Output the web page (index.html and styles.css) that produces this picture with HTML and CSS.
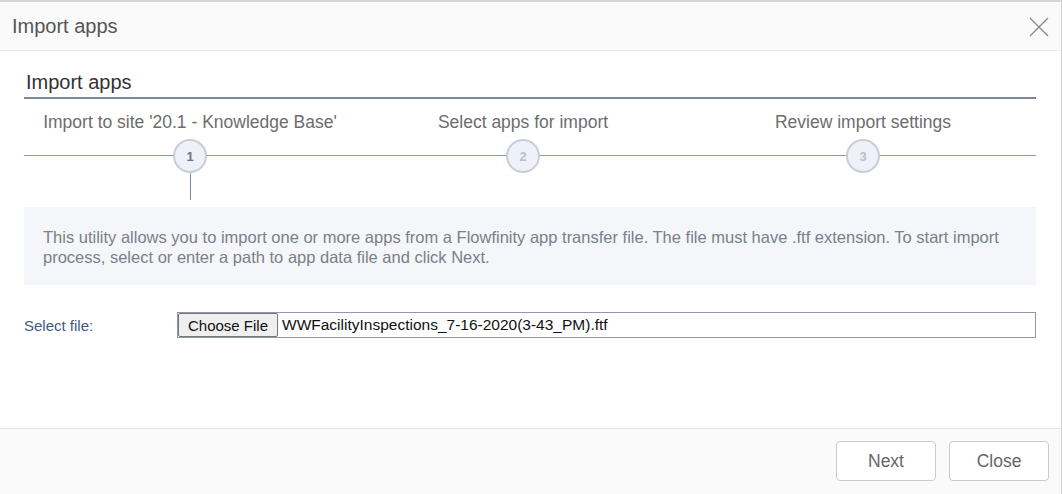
FILE: index.html
```html
<!DOCTYPE html>
<html>
<head>
<meta charset="utf-8">
<link rel="stylesheet" href="styles.css">
</head>
<body>
<div class="dialog">
  <div class="dlg-header">
    <span class="dlg-title">Import apps</span>
    <svg class="dlg-close" width="20" height="20" viewBox="0 0 20 20"><path d="M1 1 L19 19 M19 1 L1 19" stroke="#8a8a8a" stroke-width="1.3" fill="none"/></svg>
  </div>
  <div class="dlg-body">
    <div class="section-title">Import apps</div>
    <div class="steps">
      <div class="step active">
        <div class="step-label">Import to site '20.1 - Knowledge Base'</div>
        <div class="step-track"><span class="step-circle">1</span></div>
        <div class="step-connector"></div>
      </div>
      <div class="step">
        <div class="step-label">Select apps for import</div>
        <div class="step-track"><span class="step-circle">2</span></div>
      </div>
      <div class="step">
        <div class="step-label">Review import settings</div>
        <div class="step-track"><span class="step-circle">3</span></div>
      </div>
    </div>
    <div class="info">This utility allows you to import one or more apps from a Flowfinity app transfer file. The file must have .ftf extension. To start import process, select or enter a path to app data file and click Next.</div>
    <div class="file-row">
      <label class="file-label">Select file:</label>
      <div class="file-input">
        <span class="file-btn">Choose File</span>
        <span class="file-name">WWFacilityInspections_7-16-2020(3-43_PM).ftf</span>
      </div>
    </div>
  </div>
  <div class="dlg-footer">
    <button class="btn">Next</button>
    <button class="btn">Close</button>
  </div>
</div>
</body>
</html>
```

FILE: styles.css
```css
html, body {
  margin: 0;
  padding: 0;
  background: #ffffff;
}
body {
  font-family: "Liberation Sans", Arial, sans-serif;
}
.dialog {
  box-sizing: border-box;
  width: 1062px;
  height: 494px;
  border-top: 2px solid #d6d6d6;
  border-right: 1px solid #d2d2d2;
  display: flex;
  flex-direction: column;
  background: #fff;
}
.dlg-header {
  height: 48px;
  flex: none;
  background: #fafafa;
  border-bottom: 1px solid #e8e8e8;
  display: flex;
  align-items: center;
  justify-content: space-between;
  padding: 0 12px 0 12px;
}
.dlg-title {
  font-size: 20px;
  color: #555;
}
.dlg-close {
  display: block;
  margin-top: 2px;
}
.dlg-body {
  flex: 1;
  padding: 19px 25px 0 24px;
}
.section-title {
  font-size: 20px;
  color: #333;
  line-height: 24px;
  padding-left: 2px;
  padding-bottom: 3px;
  border-bottom: 2px solid #7b8699;
}
.steps {
  display: grid;
  grid-template-columns: 332px 334px 1fr;
  margin-top: 14px;
}
.step {
  display: flex;
  flex-direction: column;
  align-items: center;
}
.step-label {
  font-size: 17.5px;
  line-height: 18px;
  color: #6d6d6d;
  white-space: nowrap;
}
.step-track {
  align-self: stretch;
  height: 34px;
  margin-top: 8px;
  display: flex;
  justify-content: center;
  align-items: center;
  background: linear-gradient(#8d9bbb, #8d9bbb) 0 16px / 100% 1px no-repeat;
}
.step-circle {
  box-sizing: border-box;
  width: 34px;
  height: 34px;
  border-radius: 50%;
  border: 2px solid #c9ced8;
  background: #eef1f7;
  display: flex;
  align-items: center;
  justify-content: center;
  font-size: 13px;
  font-weight: bold;
  color: #b7bfcf;
}
.step.active .step-circle {
  color: #67758f;
}
.step-connector {
  width: 1px;
  height: 27px;
  background: #7d8bab;
}
.info {
  margin-top: 7px;
  background: #f4f6f9;
  padding: 20px 19px 18px 19px;
  font-size: 16.5px;
  line-height: 20px;
  color: #7b8089;
}
.file-row {
  display: flex;
  align-items: center;
  margin-top: 27px;
}
.file-label {
  width: 153px;
  font-size: 15px;
  color: #405a82;
}
.file-input {
  flex: 1;
  box-sizing: border-box;
  height: 26px;
  border: 1px solid #8e99aa;
  display: flex;
  align-items: center;
  font-size: 15px;
}
.file-btn {
  box-sizing: border-box;
  height: 24px;
  width: 100px;
  display: flex;
  align-items: center;
  justify-content: center;
  background: #efefef;
  border: 1px solid #767676;
  border-radius: 2px;
  color: #111;
}
.file-name {
  margin-left: 4px;
  font-size: 15.5px;
  color: #111;
}
.dlg-footer {
  box-sizing: border-box;
  flex: none;
  height: 66px;
  background: #fafafa;
  border-top: 1px solid #e6e6e6;
  display: flex;
  justify-content: flex-end;
  align-items: flex-start;
  gap: 13px;
  padding: 12px 12px 0 0;
}
.btn {
  width: 100px;
  height: 40px;
  background: #fff;
  border: 1px solid #cbcbcb;
  border-radius: 4px;
  font-family: "Liberation Sans", Arial, sans-serif;
  font-size: 17.5px;
  color: #666;
  padding: 0;
}
```
